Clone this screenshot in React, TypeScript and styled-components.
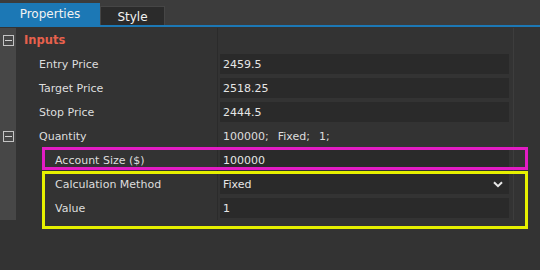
import styled, { createGlobalStyle } from "styled-components";

const Global = createGlobalStyle`
  body {
    margin: 0;
    background: #333333;
    font-family: "DejaVu Sans", Verdana, sans-serif;
  }
`;

const Page = styled.div`
  width: 540px;
  height: 270px;
  background: #333333;
  overflow: hidden;
`;

const TabBar = styled.div`
  height: 25px;
  display: flex;
  align-items: flex-end;
  background: #3c3c3c;
  border-bottom: 2px solid #1c78b5;
`;

const Tab = styled.div<{ $active?: boolean }>`
  box-sizing: border-box;
  height: ${(p) => (p.$active ? "22px" : "19px")};
  width: ${(p) => (p.$active ? "100px" : "65px")};
  display: flex;
  align-items: center;
  justify-content: center;
  padding-top: ${(p) => (p.$active ? "0" : "2px")};
  font-size: 12px;
  color: #f2f2f2;
  background: ${(p) => (p.$active ? "#1c78b5" : "#2b2b2b")};
  border: ${(p) => (p.$active ? "none" : "1px solid #464646")};
  border-bottom: none;
`;

const Body = styled.div`
  position: relative;
  padding-top: 1px;
`;

const Row = styled.div`
  display: grid;
  grid-template-columns: 16px 201px 296px 27px;
  height: 24px;
  font-size: 11px;
  color: #dedede;
`;

const Gutter = styled.div`
  background: #474747;
  display: flex;
  align-items: center;
  justify-content: center;
`;

const Label = styled.div<{ $indent: number; $head?: boolean }>`
  display: flex;
  align-items: center;
  padding-left: ${(p) => p.$indent}px;
  color: ${(p) => (p.$head ? "#e8614d" : "#dedede")};
  font-weight: ${(p) => (p.$head ? "bold" : "normal")};
  font-size: ${(p) => (p.$head ? "11.5px" : "11px")};
`;

const ValueCell = styled.div`
  border-left: 1px solid #2b2b2b;
  display: flex;
  align-items: center;
  padding: 2px 4px 2px 2px;
`;

const Plain = styled.span`
  padding-left: 3px;
  white-space: pre;
  word-spacing: 1px;
`;

const Field = styled.div`
  flex: 1;
  height: 20px;
  box-sizing: border-box;
  background: #2a2a2a;
  display: flex;
  align-items: center;
  justify-content: space-between;
  padding: 0 6px 0 3px;
  color: #e6e6e6;
`;

const Edge = styled.div`
  border-left: 1px solid #3d3d3d;
`;

const Minus = styled.div`
  width: 9px;
  height: 9px;
  border: 1px solid #c4c4c4;
  display: flex;
  align-items: center;
  justify-content: center;
  &::after {
    content: "";
    width: 7px;
    height: 1px;
    background: #d0d0d0;
  }
`;

const Marker = styled.div<{ $color: string; $top: number; $height: number }>`
  position: absolute;
  left: 42px;
  width: 486px;
  top: ${(p) => p.$top}px;
  height: ${(p) => p.$height}px;
  box-sizing: border-box;
  border: 3px solid ${(p) => p.$color};
  pointer-events: none;
`;

const Chevron = () => (
  <svg width="10" height="7" viewBox="0 0 10 7">
    <path d="M1 1.2 L5 5.2 L9 1.2" fill="none" stroke="#e8e8e8" strokeWidth="2" />
  </svg>
);

type Item = {
  label: string;
  indent: number;
  value?: string;
  plain?: string;
  toggle?: boolean;
  select?: boolean;
};

const items: Item[] = [
  { label: "Entry Price", indent: 23, value: "2459.5" },
  { label: "Target Price", indent: 23, value: "2518.25" },
  { label: "Stop Price", indent: 23, value: "2444.5" },
  { label: "Quantity", indent: 23, plain: "100000;  Fixed;  1;", toggle: true },
  { label: "Account Size ($)", indent: 39, value: "100000" },
  { label: "Calculation Method", indent: 39, value: "Fixed", select: true },
  { label: "Value", indent: 39, value: "1" },
];

const App = () => (
  <Page>
    <Global />
    <TabBar>
      <Tab $active>Properties</Tab>
      <Tab>Style</Tab>
    </TabBar>
    <Body>
      <Row>
        <Gutter>
          <Minus />
        </Gutter>
        <Label $indent={8} $head>
          Inputs
        </Label>
        <ValueCell />
        <Edge />
      </Row>
      {items.map((it) => (
        <Row key={it.label}>
          <Gutter>{it.toggle && <Minus />}</Gutter>
          <Label $indent={it.indent}>{it.label}</Label>
          <ValueCell>
            {it.plain ? (
              <Plain>{it.plain}</Plain>
            ) : (
              <Field>
                {it.value}
                {it.select && <Chevron />}
              </Field>
            )}
          </ValueCell>
          <Edge />
        </Row>
      ))}
      <Marker $color="#e21cc4" $top={120} $height={23} />
      <Marker $color="#e6f000" $top={144} $height={58} />
    </Body>
  </Page>
);

export default App;
